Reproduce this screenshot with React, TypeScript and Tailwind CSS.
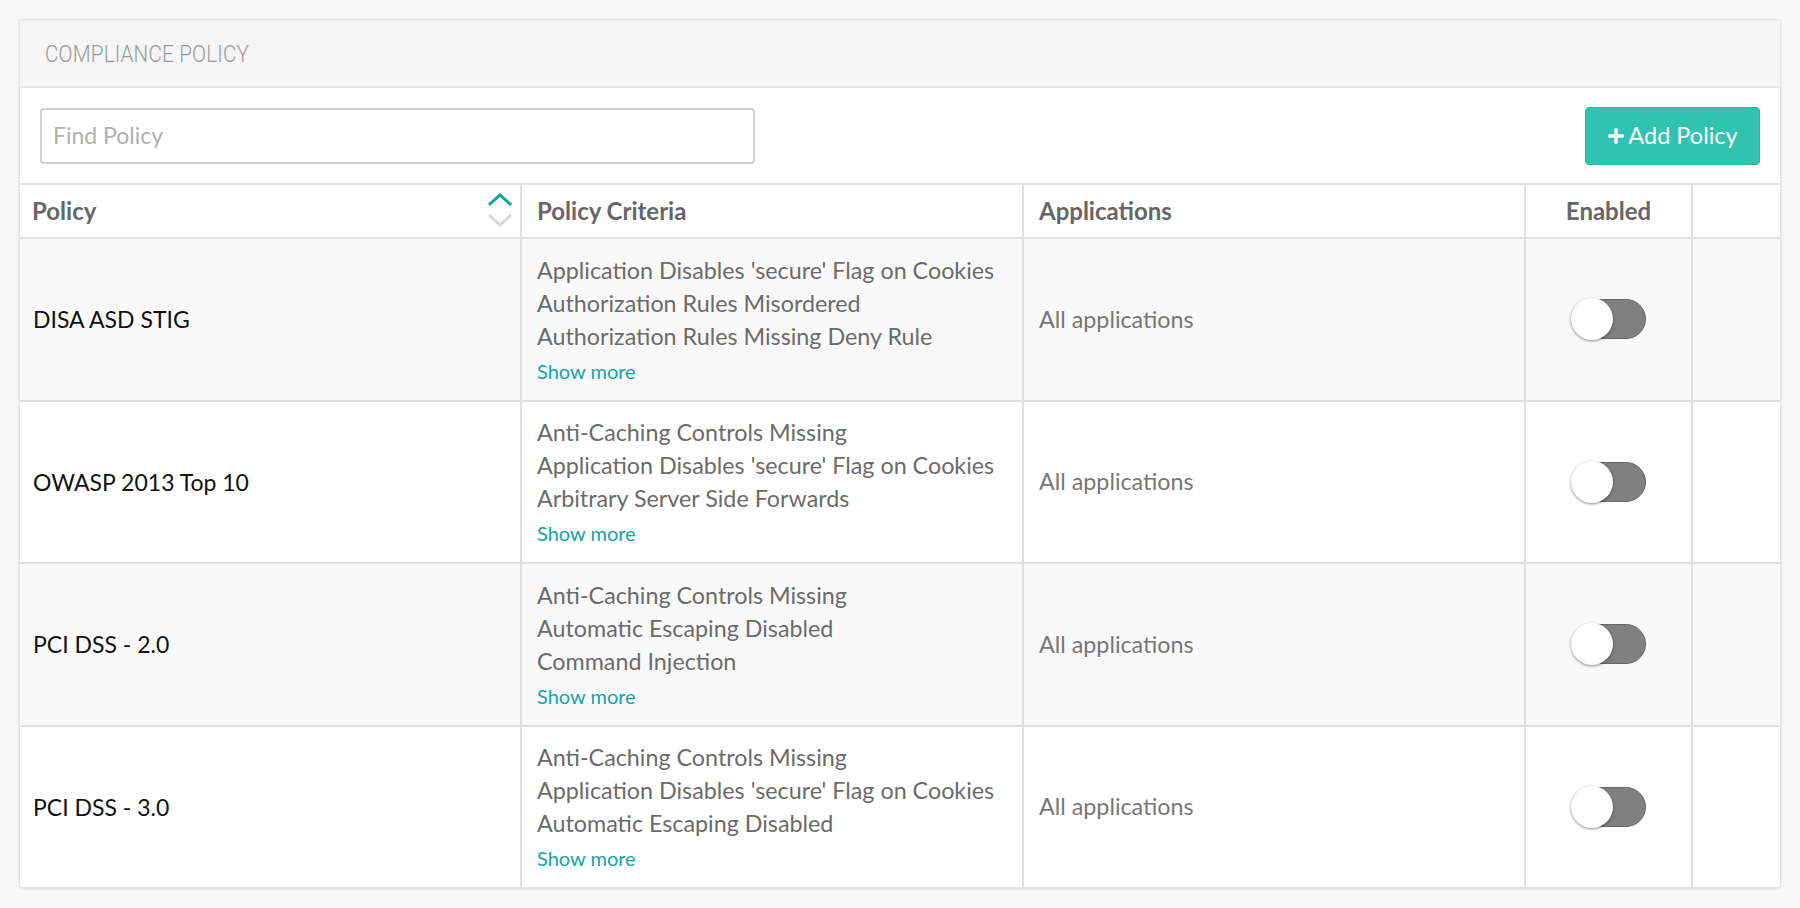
import React from "react";
import { FaPlus } from "react-icons/fa";

const rows = [
  {
    name: "DISA ASD STIG",
    criteria: [
      "Application Disables 'secure' Flag on Cookies",
      "Authorization Rules Misordered",
      "Authorization Rules Missing Deny Rule",
    ],
  },
  {
    name: "OWASP 2013 Top 10",
    criteria: [
      "Anti-Caching Controls Missing",
      "Application Disables 'secure' Flag on Cookies",
      "Arbitrary Server Side Forwards",
    ],
  },
  {
    name: "PCI DSS - 2.0",
    criteria: [
      "Anti-Caching Controls Missing",
      "Automatic Escaping Disabled",
      "Command Injection",
    ],
  },
  {
    name: "PCI DSS - 3.0",
    criteria: [
      "Anti-Caching Controls Missing",
      "Application Disables 'secure' Flag on Cookies",
      "Automatic Escaping Disabled",
    ],
  },
];

function SortIcon() {
  return (
    <svg width="24" height="36" viewBox="0 0 24 36" fill="none">
      <path d="M2 11 L12 2 L22 11" stroke="#0fa3a3" strokeWidth="3" strokeLinecap="square" />
      <path d="M2 23 L12 32 L22 23" stroke="#d6d6d6" strokeWidth="3" strokeLinecap="square" />
    </svg>
  );
}

function Toggle() {
  return (
    <div className="relative w-[74px] h-[40px]">
      <div className="absolute inset-0 rounded-full bg-[#808080] border border-[#666666]" />
      <div className="absolute left-[-1px] top-[-1px] w-[42px] h-[42px] rounded-full bg-white shadow-[0_1px_3px_rgba(0,0,0,0.45)]" />
    </div>
  );
}

export default function App() {
  return (
    <div
      className="min-h-screen bg-[#f8f8f8] p-[19px]"
      style={{ fontFamily: "Lato, 'Noto Sans', sans-serif" }}
    >
      <div className="bg-white border border-[#e2e2e2] rounded-[4px] shadow-[0_1px_3px_rgba(0,0,0,0.12)] overflow-hidden">
        <div className="h-[68px] bg-[#f5f5f5] border-b-2 border-[#e6e6e6] flex items-center px-[25px] pt-[1px]">
          <span
            className="inline-block origin-left scale-x-[0.86] text-[24px] font-light text-[#9a9a9a] tracking-[0.2px]"
            style={{ fontFamily: "Roboto, 'Liberation Sans', sans-serif" }}
          >
            COMPLIANCE POLICY
          </span>
        </div>
        <div className="h-[95px] flex items-center justify-between px-[20px]">
          <div className="w-[715px] h-[56px] border-2 border-[#d0d0d0] rounded-[4px] flex items-center px-[11px]">
            <input
              className="w-full outline-none bg-transparent text-[23px] text-[#555] placeholder:text-[#b0b0b0]"
              placeholder="Find Policy"
            />
          </div>
          <button className="w-[175px] h-[58px] bg-[#30c4b0] border border-[#27b8a4] rounded-[4px] flex items-center justify-center gap-[3px] text-white text-[23.5px]">
            <FaPlus className="w-[18px] h-[18px]" />
            <span>Add Policy</span>
          </button>
        </div>
        <div className="grid grid-cols-[502px_502px_502px_167px_1fr] border-t-2 border-[#e0e0e0]">
          <div className="h-[52px] border-r-2 border-[#e0e0e0] flex items-center justify-between pl-[12px] pr-[8px] text-[24px] font-bold text-[#666]">
            <span>Policy</span>
            <SortIcon />
          </div>
          <div className="h-[52px] border-r-2 border-[#e0e0e0] flex items-center pl-[15px] text-[24px] font-bold text-[#666]">
            Policy Criteria
          </div>
          <div className="h-[52px] border-r-2 border-[#e0e0e0] flex items-center pl-[15px] text-[24px] font-bold text-[#666]">
            Applications
          </div>
          <div className="h-[52px] border-r-2 border-[#e0e0e0] flex items-center justify-center text-[24px] font-bold text-[#666]">
            Enabled
          </div>
          <div className="h-[52px]" />
          {rows.map((r, i) => {
            const bg = i % 2 === 0 ? "bg-[#f9f9f9]" : "bg-white";
            return (
              <React.Fragment key={r.name}>
                <div className={`${bg} h-[162.5px] border-t-2 border-r-2 border-[#e0e0e0] flex items-center pl-[13px] text-[23px] text-[#111]`}>
                  {r.name}
                </div>
                <div className={`${bg} h-[162.5px] border-t-2 border-r-2 border-[#e0e0e0] flex flex-col justify-center pl-[15px] pt-[4px]`}>
                  {r.criteria.map((c) => (
                    <div key={c} className="text-[23.3px] leading-[33px] text-[#6b6b6b]">
                      {c}
                    </div>
                  ))}
                  <div className="text-[20px] leading-[36px] text-[#12a5a8]">Show more</div>
                </div>
                <div className={`${bg} h-[162.5px] border-t-2 border-r-2 border-[#e0e0e0] flex items-center pl-[15px] text-[23.3px] text-[#777]`}>
                  All applications
                </div>
                <div className={`${bg} h-[162.5px] border-t-2 border-r-2 border-[#e0e0e0] flex items-center justify-center`}>
                  <Toggle />
                </div>
                <div className={`${bg} h-[162.5px] border-t-2 border-[#e0e0e0]`} />
              </React.Fragment>
            );
          })}
        </div>
      </div>
    </div>
  );
}
